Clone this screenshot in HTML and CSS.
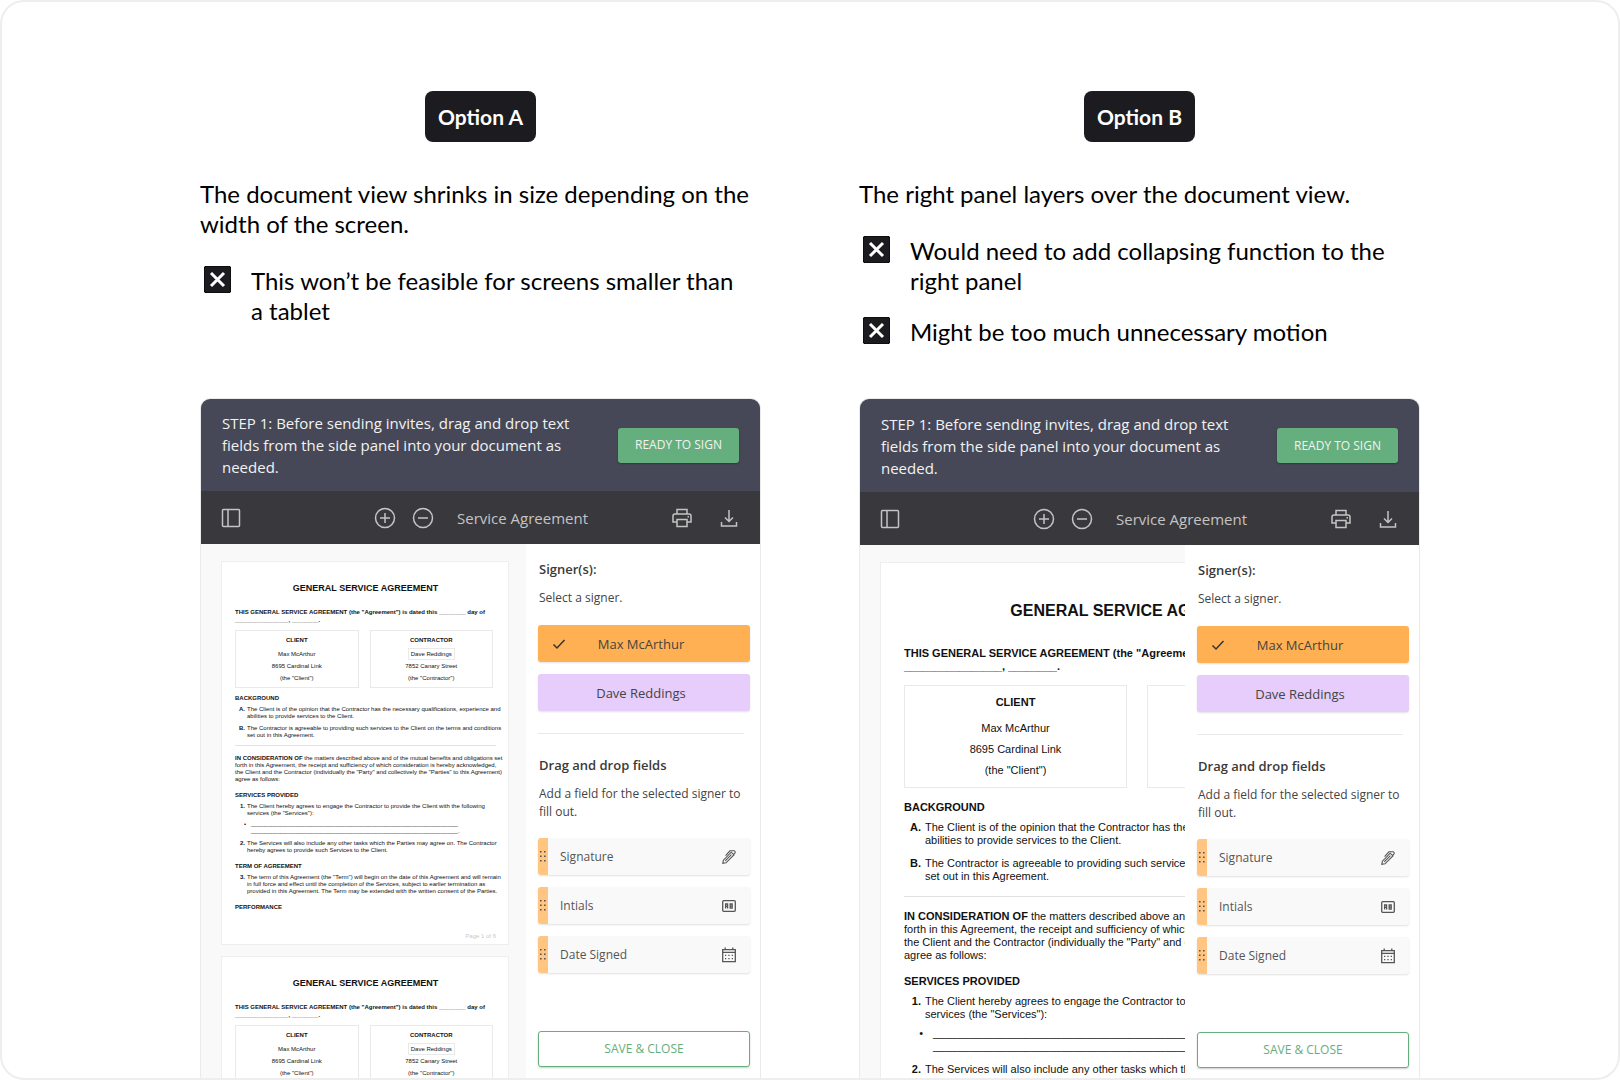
FILE: index.html
```html
<!DOCTYPE html>
<html lang="en">
  <head>
    <meta charset="UTF-8" />
    <meta name="viewport" content="width=device-width, initial-scale=1.0" />
    <title>Service Agreement - layout options</title>
    <link rel="stylesheet" href="styles.css">
  </head>
  <body>
    <!-- shared icons -->
    <svg class="sprite" aria-hidden="true">
      <symbol id="i-cross" viewBox="0 0 27 27">
        <rect width="27" height="27" rx="3" fill="#1c1b20" />
        <path d="M7 7l13 13M20 7L7 20" stroke="#fff" stroke-width="3" />
      </symbol>
      <symbol id="i-panel" viewBox="0 0 20 20">
        <rect x="1.5" y="1.5" width="17" height="17" rx="1" />
        <path d="M7 1.5v17" />
      </symbol>
      <symbol id="i-plus" viewBox="0 0 22 22">
        <circle cx="11" cy="11" r="9.5" />
        <path d="M11 6v10M6 11h10" />
      </symbol>
      <symbol id="i-minus" viewBox="0 0 22 22">
        <circle cx="11" cy="11" r="9.5" />
        <path d="M6 11h10" />
      </symbol>
      <symbol id="i-print" viewBox="0 0 22 22">
        <path d="M6 7V2.500h10V7M6 15H2V9q0-2 2-2h14q2 0 2 2v6h-4M6 12.500h10v7H6z" />
        <path d="M16.500 9.800h1.500" />
      </symbol>
      <symbol id="i-download" viewBox="0 0 18 18">
        <path d="M9 1v11M5 8.500l4 4 4-4M1.500 13v4h15v-4" />
      </symbol>
      <symbol id="i-check" viewBox="0 0 14 12">
        <path d="M1.500 6.500l3.500 3.500 7.500-8" />
      </symbol>
      <symbol id="i-grip" viewBox="0 0 6 11">
        <path d="M0 .8h1.600M4 .8h1.600M0 5.300h1.600M4 5.300h1.600M0 9.800h1.600M4 9.800h1.600" stroke-width="1.6" />
      </symbol>
      <symbol id="i-pen" viewBox="0 0 16 16">
        <path d="M1.800 14.400l.6-3.200 7.800-8 2.700 2.700-7.900 7.900zM4.600 6.600l4.300-4.800h4.300q1.700.9.600 2.400l-1.300 1.500M4.200 11.900l6.200-6.300" stroke-width="1.100" />
      </symbol>
      <symbol id="i-initials" viewBox="0 0 16 16">
        <rect x="1.7" y="2.7" width="12.6" height="10.6" rx="1" />
        <path d="M4.600 10.500V6h2v4.500M4.600 8.400h2M9.200 6h2v4.200h-2zM9.200 8.100h2" />
      </symbol>
      <symbol id="i-calendar" viewBox="0 0 16 16">
        <path d="M1.700 2.700h12.600v12H1.700zM1.700 5.400h12.600M4.200.5v2.500M11.800.5v2.500" />
        <path d="M4 8.300h1.300M7.300 8.300h1.300M10.700 8.300H12M4 11.600h1.300M7.300 11.600h1.300M10.700 11.600H12" />
      </symbol>
    </svg>

    <main class="board">
      <!-- ===== Option A ===== -->
      <section class="option">
        <div class="notes">
          <h2 class="tag">Option A</h2>
          <p>The document view shrinks in size depending on the width of the screen.</p>
          <ul class="cons">
            <li><svg class="cross"><use href="#i-cross" /></svg>This won’t be feasible for screens smaller than a tablet</li>
          </ul>
        </div>

        <div class="app">
          <header class="step">
            <p>STEP 1: Before sending invites, drag and drop text fields from the side panel into your document as needed.</p>
            <button type="button" class="btn-ready">READY TO SIGN</button>
          </header>
          <div class="toolbar">
            <button type="button" aria-label="Toggle sidebar"><svg class="ic-20"><use href="#i-panel" /></svg></button>
            <div class="toolbar-mid">
              <button type="button" aria-label="Zoom in"><svg class="ic-22"><use href="#i-plus" /></svg></button>
              <button type="button" aria-label="Zoom out"><svg class="ic-22"><use href="#i-minus" /></svg></button>
              <span class="file-name">Service Agreement</span>
            </div>
            <div class="toolbar-end">
              <button type="button" aria-label="Print"><svg class="ic-22"><use href="#i-print" /></svg></button>
              <button type="button" aria-label="Download"><svg class="ic-18"><use href="#i-download" /></svg></button>
            </div>
          </div>

          <div class="workspace">
            <div class="viewer">
              <article class="page">
                <h3>GENERAL SERVICE AGREEMENT</h3>
                <p class="intro">THIS GENERAL SERVICE AGREEMENT (the "Agreement") is dated this ________ day of<br />________________, ________.</p>
                <div class="parties">
                  <div class="party">
                    <h4>CLIENT</h4>
                    <p>Max McArthur</p>
                    <p>8695 Cardinal Link</p>
                    <p>(the "Client")</p>
                  </div>
                  <div class="party">
                    <h4>CONTRACTOR</h4>
                    <p><span class="boxed">Dave Reddings</span></p>
                    <p>7852 Canary Street</p>
                    <p>(the "Contractor")</p>
                  </div>
                </div>
                <h4>BACKGROUND</h4>
                <ol class="alpha">
                  <li>The Client is of the opinion that the Contractor has the necessary qualifications, experience and<br />abilities to provide services to the Client.</li>
                  <li>The Contractor is agreeable to providing such services to the Client on the terms and conditions<br />set out in this Agreement.</li>
                </ol>
                <hr />
                <p class="recital"><b>IN CONSIDERATION OF</b> the matters described above and of the mutual benefits and obligations set<br />forth in this Agreement, the receipt and sufficiency of which consideration is hereby acknowledged,<br />the Client and the Contractor (individually the "Party" and collectively the "Parties" to this Agreement)<br />agree as follows:</p>
                <h4>SERVICES PROVIDED</h4>
                <ol>
                  <li>The Client hereby agrees to engage the Contractor to provide the Client with the following<br />services (the "Services"):
                    <ul class="blanks">
                      <li>______________________________________________________________<br />______________________________________________________________.</li>
                    </ul>
                  </li>
                  <li>The Services will also include any other tasks which the Parties may agree on. The Contractor<br />hereby agrees to provide such Services to the Client.</li>
                </ol>
                <h4>TERM OF AGREEMENT</h4>
                <ol start="3">
                  <li>The term of this Agreement (the "Term") will begin on the date of this Agreement and will remain<br />in full force and effect until the completion of the Services, subject to earlier termination as<br />provided in this Agreement. The Term may be extended with the written consent of the Parties.</li>
                </ol>
                <h4>PERFORMANCE</h4>
                <footer>Page 1 of 6</footer>
              </article>

              <article class="page">
                <h3>GENERAL SERVICE AGREEMENT</h3>
                <p class="intro">THIS GENERAL SERVICE AGREEMENT (the "Agreement") is dated this ________ day of<br />________________, ________.</p>
                <div class="parties">
                  <div class="party">
                    <h4>CLIENT</h4>
                    <p>Max McArthur</p>
                    <p>8695 Cardinal Link</p>
                    <p>(the "Client")</p>
                  </div>
                  <div class="party">
                    <h4>CONTRACTOR</h4>
                    <p><span class="boxed">Dave Reddings</span></p>
                    <p>7852 Canary Street</p>
                    <p>(the "Contractor")</p>
                  </div>
                </div>
              </article>
            </div>

            <aside class="panel">
              <h3>Signer(s):</h3>
              <p>Select a signer.</p>
              <button type="button" class="signer signer-max"><svg class="check"><use href="#i-check" /></svg>Max McArthur</button>
              <button type="button" class="signer signer-dave">Dave Reddings</button>
              <hr />
              <h3>Drag and drop fields</h3>
              <p>Add a field for the selected signer to fill out.</p>
              <ul class="fields">
                <li><span class="grip"><svg><use href="#i-grip" /></svg></span>Signature<svg class="field-icon"><use href="#i-pen" /></svg></li>
                <li><span class="grip"><svg><use href="#i-grip" /></svg></span>Intials<svg class="field-icon"><use href="#i-initials" /></svg></li>
                <li><span class="grip"><svg><use href="#i-grip" /></svg></span>Date Signed<svg class="field-icon"><use href="#i-calendar" /></svg></li>
              </ul>
              <button type="button" class="btn-save">SAVE &amp; CLOSE</button>
            </aside>
          </div>
        </div>
      </section>

      <!-- ===== Option B ===== -->
      <section class="option">
        <div class="notes">
          <h2 class="tag">Option B</h2>
          <p>The right panel layers over the document view.</p>
          <ul class="cons">
            <li><svg class="cross"><use href="#i-cross" /></svg>Would need to add collapsing function to the right panel</li>
            <li><svg class="cross"><use href="#i-cross" /></svg>Might be too much unnecessary motion</li>
          </ul>
        </div>

        <div class="app app-layered">
          <header class="step">
            <p>STEP 1: Before sending invites, drag and drop text fields from the side panel into your document as needed.</p>
            <button type="button" class="btn-ready">READY TO SIGN</button>
          </header>
          <div class="toolbar">
            <button type="button" aria-label="Toggle sidebar"><svg class="ic-20"><use href="#i-panel" /></svg></button>
            <div class="toolbar-mid">
              <button type="button" aria-label="Zoom in"><svg class="ic-22"><use href="#i-plus" /></svg></button>
              <button type="button" aria-label="Zoom out"><svg class="ic-22"><use href="#i-minus" /></svg></button>
              <span class="file-name">Service Agreement</span>
            </div>
            <div class="toolbar-end">
              <button type="button" aria-label="Print"><svg class="ic-22"><use href="#i-print" /></svg></button>
              <button type="button" aria-label="Download"><svg class="ic-18"><use href="#i-download" /></svg></button>
            </div>
          </div>

          <div class="workspace">
            <div class="viewer">
              <article class="page page-full">
                <h3>GENERAL SERVICE AGREEMENT</h3>
                <p class="intro">THIS GENERAL SERVICE AGREEMENT (the "Agreement")<br />________________, ________.</p>
                <div class="parties">
                  <div class="party">
                    <h4>CLIENT</h4>
                    <p>Max McArthur</p>
                    <p>8695 Cardinal Link</p>
                    <p>(the "Client")</p>
                  </div>
                  <div class="party"></div>
                </div>
                <h4>BACKGROUND</h4>
                <ol class="alpha">
                  <li>The Client is of the opinion that the Contractor has the necessary<br />abilities to provide services to the Client.</li>
                  <li>The Contractor is agreeable to providing such services to the Client<br />set out in this Agreement.</li>
                </ol>
                <hr />
                <p class="recital"><b>IN CONSIDERATION OF</b> the matters described above and of the mutual<br />forth in this Agreement, the receipt and sufficiency of which consideration<br />the Client and the Contractor (individually the "Party" and collectively<br />agree as follows:</p>
                <h4>SERVICES PROVIDED</h4>
                <ol>
                  <li>The Client hereby agrees to engage the Contractor to provide the<br />services (the "Services"):
                    <ul class="blanks">
                      <li>______________________________________________________________<br />______________________________________________________________.</li>
                    </ul>
                  </li>
                  <li>The Services will also include any other tasks which the Parties</li>
                </ol>
              </article>
            </div>

            <aside class="panel">
              <h3>Signer(s):</h3>
              <p>Select a signer.</p>
              <button type="button" class="signer signer-max"><svg class="check"><use href="#i-check" /></svg>Max McArthur</button>
              <button type="button" class="signer signer-dave">Dave Reddings</button>
              <hr />
              <h3>Drag and drop fields</h3>
              <p>Add a field for the selected signer to fill out.</p>
              <ul class="fields">
                <li><span class="grip"><svg><use href="#i-grip" /></svg></span>Signature<svg class="field-icon"><use href="#i-pen" /></svg></li>
                <li><span class="grip"><svg><use href="#i-grip" /></svg></span>Intials<svg class="field-icon"><use href="#i-initials" /></svg></li>
                <li><span class="grip"><svg><use href="#i-grip" /></svg></span>Date Signed<svg class="field-icon"><use href="#i-calendar" /></svg></li>
              </ul>
              <button type="button" class="btn-save">SAVE &amp; CLOSE</button>
            </aside>
          </div>
        </div>
      </section>
    </main>
  </body>
</html>
```
FILE: styles.css
```css
* {
  margin: 0;
  padding: 0;
  box-sizing: border-box;
}
body {
  height: 100vh;
  font-family: "Open Sans", "Liberation Sans", sans-serif;
  color: #000;
  background-color: #fff;
}
ul,
ol {
  list-style: none;
}
button {
  font: inherit;
  color: inherit;
  background: none;
  border: none;
  cursor: pointer;
}
svg {
  display: block;
  flex: none;
  fill: none;
  stroke: currentColor;
}
.sprite {
  position: absolute;
  width: 0;
  height: 0;
}
.board {
  display: grid;
  grid-template-columns: repeat(2, minmax(0, 561px));
  justify-content: center;
  gap: 98px;
  height: 100vh;
  padding: 89px 40px 0;
  overflow: hidden;
  border: 2px solid #eee;
  border-radius: 24px;
}
.option {
  display: flex;
  flex-direction: column;
  min-height: 0;
}

/* === notes === */
.notes {
  min-height: 307px;
  font-family: Lato, "Open Sans", sans-serif;
  font-size: 24px;
  line-height: 30px;
}
.tag {
  width: fit-content;
  margin: 0 auto 37px;
  padding: 0 13px;
  border-radius: 8px;
  background-color: #1c1b20;
  color: #fff;
  font-size: 21px;
  font-weight: 700;
  line-height: 51px;
}
.cons {
  display: flex;
  flex-direction: column;
  gap: 21px;
  margin-top: 27px;
}
.cons li {
  display: flex;
  gap: 20px;
  padding: 0 12px 0 4px;
}
.cross {
  width: 27px;
  height: 27px;
}

/* === app window === */
.app {
  flex: 1;
  display: flex;
  flex-direction: column;
  min-height: 0;
  overflow: hidden;
  border: 1px solid #ebebeb;
  border-bottom: none;
  border-radius: 10px 10px 0 0;
}
.step {
  flex: none;
  display: flex;
  justify-content: space-between;
  align-items: center;
  gap: 20px;
  height: 92px;
  padding: 0 21px;
  background-color: #464857;
  color: #f2f2f2;
  font-size: 15px;
  line-height: 22px;
}
.app-layered .step {
  height: 93px;
}
.step p {
  max-width: 350px;
}
.btn-ready {
  flex: none;
  width: 121px;
  height: 35px;
  border-radius: 3px;
  background-color: #65ae7d;
  box-shadow: 0 1px 2px rgba(0, 0, 0, 0.25);
  font-size: 12px;
}
.toolbar {
  flex: none;
  display: flex;
  align-items: center;
  height: 53px;
  padding: 0 22px 0 20px;
  background-color: #39383d;
  color: #c4c4c4;
  stroke-width: 1.5px;
}
.toolbar-mid {
  display: flex;
  align-items: center;
  gap: 16px;
  margin-left: 133px;
}
.file-name {
  margin-left: 7px;
  font-size: 15px;
  font-weight: 500;
  line-height: 20px;
}
.toolbar-end {
  display: flex;
  gap: 27px;
  margin-left: auto;
}
.ic-18 {
  width: 18px;
  height: 22px;
}
.ic-20 {
  width: 20px;
  height: 20px;
}
.ic-22 {
  width: 22px;
  height: 22px;
}

/* === document === */
.workspace {
  flex: 1;
  display: flex;
  min-height: 0;
  overflow: hidden;
}
.viewer {
  flex: 1;
  min-width: 0;
  padding: 17px 17px 0 20px;
  overflow: hidden;
  background-color: #f9f9f9;
}
.page {
  height: 384px;
  margin-bottom: 11px;
  padding: 22px 12px 0 13px;
  border: 1px solid #eee;
  background-color: #fff;
  color: #111;
  font-family: "Liberation Sans", Arial, sans-serif;
  font-size: 6px;
  line-height: 7px;
  white-space: nowrap;
}
.page h3 {
  font-size: 9px;
  line-height: 9px;
  text-align: center;
}
.page h4 {
  font-size: inherit;
}
.intro {
  margin-top: 15px;
  font-weight: 700;
  line-height: 8px;
}
.parties {
  display: grid;
  grid-template-columns: 1fr 1fr;
  gap: 11px;
  height: 58px;
  margin: 6px 3px 7px 0;
}
.party {
  display: flex;
  flex-direction: column;
  gap: 5px;
  padding-top: 6px;
  border: 1px solid #e9e9e9;
  text-align: center;
}
.party h4 {
  margin-bottom: 2px;
}
.boxed {
  padding: 2px;
  border: 1px solid #e9e9e9;
}
.page ol {
  margin: 4px 0 9px;
  padding-left: 12px;
  counter-reset: clause;
}
.page ol[start="3"] {
  counter-reset: clause 2;
}
.page ol > li {
  position: relative;
  margin-bottom: 5px;
  counter-increment: clause;
}
.page ol > li::before {
  content: counter(clause) ".";
  position: absolute;
  right: 100%;
  margin-right: 2px;
  font-weight: 700;
}
.page .alpha > li::before {
  content: counter(clause, upper-alpha) ".";
}
.page hr {
  border: none;
  border-top: 1px solid #e2e2e2;
}
.page ol.alpha {
  margin-bottom: 6px;
}
.recital {
  margin: 9px 0;
}
.blanks {
  margin-top: 4px;
  padding-left: 4px;
}
.blanks li {
  position: relative;
}
.blanks li::before {
  content: "•";
  position: absolute;
  right: 100%;
  margin-right: 5px;
}
.page footer {
  margin-top: 22px;
  color: #c9c9c9;
  text-align: right;
}

/* full size document, runs on under the panel */
.page-full {
  width: 517px;
  height: 687px;
  padding: 40px 21px 0 23px;
  font-size: 11px;
  line-height: 13px;
}
.page-full h3 {
  font-size: 16px;
  line-height: 16px;
}
.page-full .intro {
  margin-top: 28px;
  line-height: 13px;
}
.page-full .parties {
  gap: 20px;
  height: 103px;
  margin: 12px 5px 13px 0;
}
.page-full .party {
  gap: 8px;
  padding-top: 10px;
}
.page-full .party h4 {
  margin-bottom: 5px;
}
.page-full ol,
.page-full ol.alpha {
  margin: 7px 0 13px;
  padding-left: 21px;
}
.page-full ol > li {
  margin-bottom: 10px;
}
.page-full ol > li::before {
  margin-right: 4px;
}
.page-full .recital {
  margin: 13px 0;
}
.page-full .blanks {
  margin-top: 6px;
  padding-left: 8px;
}
.page-full .blanks li::before {
  margin-right: 10px;
}

/* === side panel === */
.panel {
  flex: none;
  width: 234px;
  padding: 16px 10px 0 12px;
  background-color: #fff;
  color: #444;
  font-size: 12px;
  line-height: 18px;
}
.panel h3,
.panel p {
  padding-left: 1px;
}
.panel h3 {
  margin-bottom: 11px;
  color: #3a3a3a;
  font-size: 13px;
  font-weight: 600;
  line-height: 18px;
}
.signer {
  display: flex;
  align-items: center;
  justify-content: center;
  position: relative;
  width: 100%;
  height: 37px;
  padding-right: 6px;
  border-radius: 3px;
  box-shadow: 0 1px 2px rgba(0, 0, 0, 0.12);
  font-size: 13px;
}
.signer-max {
  margin: 18px 0 12px;
  background-color: #ffb053;
}
.signer-dave {
  background-color: #e6cdfb;
}
.check {
  position: absolute;
  left: 14px;
  width: 14px;
  height: 12px;
  stroke: #333;
  stroke-width: 1.5px;
}
.panel hr {
  margin: 22px 6px 22px 0;
  border: none;
  border-top: 1px solid #e9e9e9;
}
.fields {
  display: flex;
  flex-direction: column;
  gap: 12px;
  margin: 17px 0 58px;
}
.fields li {
  display: flex;
  align-items: center;
  height: 37px;
  padding-right: 13px;
  overflow: hidden;
  border-radius: 3px;
  background-color: #f9f9f9;
  box-shadow: 0 1px 2px rgba(0, 0, 0, 0.12);
  color: #555;
  font-weight: 500;
}
.grip {
  display: flex;
  align-items: center;
  justify-content: center;
  width: 10px;
  height: 100%;
  margin-right: 12px;
  background-color: #ffc581;
}
.grip svg {
  width: 6px;
  height: 11px;
}
.field-icon {
  width: 16px;
  height: 16px;
  margin-left: auto;
  stroke-width: 1.3px;
}
.btn-save {
  width: 100%;
  height: 36px;
  border: 1px solid #65ae7d;
  border-radius: 3px;
  box-shadow: 0 1px 2px rgba(0, 0, 0, 0.2);
  color: #65ae7d;
  font-size: 12px;
}
```
